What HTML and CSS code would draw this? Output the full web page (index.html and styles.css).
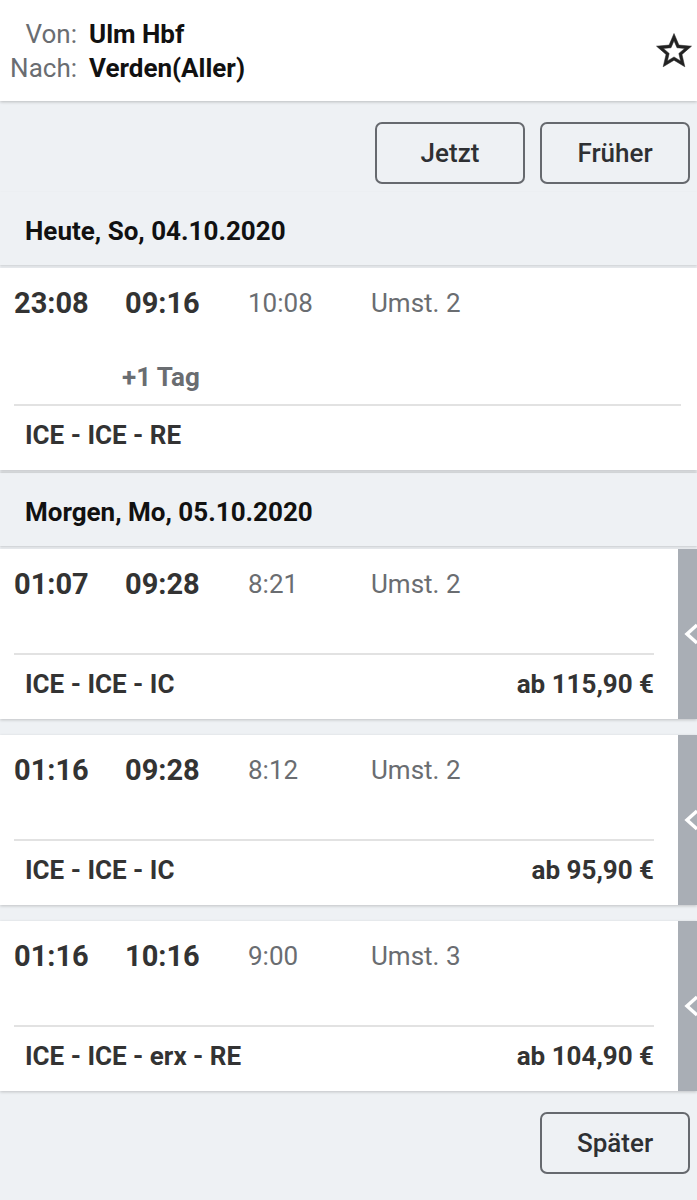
FILE: index.html
```html
<!DOCTYPE html>
<html lang="de">
<head>
<meta charset="UTF-8" />
<meta name="viewport" content="width=device-width, initial-scale=1" />
<title>Verbindungen</title>
<link rel="stylesheet" href="styles.css">
</head>
<body>

<header class="route">
  <div class="stations">
    <span class="label">Von:</span><span class="station">Ulm Hbf</span>
    <span class="label">Nach:</span><span class="station">Verden(Aller)</span>
  </div>
  <svg class="star" width="42" height="42" viewBox="0 0 24 24"><path fill="#222" stroke="#222" stroke-width="0.3" d="M22 9.24l-7.19-.62L12 2 9.19 8.63 2 9.24l5.46 4.73L5.82 21 12 17.27 18.18 21l-1.63-7.03L22 9.24zM12 15.4l-3.76 2.27 1-4.28-3.32-2.88 4.38-.38L12 6.1l1.71 4.04 4.380.38-3.32 2.88 1 4.28L12 15.4z"/></svg>
</header>

<div class="actions">
  <button class="btn">Jetzt</button>
  <button class="btn">Früher</button>
</div>

<div class="day first">Heute, So, 04.10.2020</div>

<div class="trip">
  <div class="trip-body">
    <div class="trip-main">
      <div class="times">
        <span class="dep">23:08</span>
        <span class="arr">09:16</span>
        <span class="dur">10:08</span>
        <span class="chg">Umst. 2</span>
      </div>
      <div class="next-day">+1 Tag</div>
    </div>
    <div class="trip-foot wide">
      <span class="trains">ICE - ICE - RE</span>
    </div>
  </div>
</div>

<div class="day">Morgen, Mo, 05.10.2020</div>

<div class="trip">
  <div class="trip-body">
    <div class="trip-main">
      <div class="times">
        <span class="dep">01:07</span>
        <span class="arr">09:28</span>
        <span class="dur">8:21</span>
        <span class="chg">Umst. 2</span>
      </div>
    </div>
    <div class="trip-foot">
      <span class="trains">ICE - ICE - IC</span>
      <span class="price">ab 115,90 €</span>
    </div>
  </div>
  <div class="side"><svg width="19" height="22" viewBox="0 0 19 22"><polyline points="19,2 9,11 19,20" fill="none" stroke="#fff" stroke-width="3.5"/></svg></div>
</div>

<div class="trip">
  <div class="trip-body">
    <div class="trip-main">
      <div class="times">
        <span class="dep">01:16</span>
        <span class="arr">09:28</span>
        <span class="dur">8:12</span>
        <span class="chg">Umst. 2</span>
      </div>
    </div>
    <div class="trip-foot">
      <span class="trains">ICE - ICE - IC</span>
      <span class="price">ab 95,90 €</span>
    </div>
  </div>
  <div class="side"><svg width="19" height="22" viewBox="0 0 19 22"><polyline points="19,2 9,11 19,20" fill="none" stroke="#fff" stroke-width="3.5"/></svg></div>
</div>

<div class="trip">
  <div class="trip-body">
    <div class="trip-main">
      <div class="times">
        <span class="dep">01:16</span>
        <span class="arr">10:16</span>
        <span class="dur">9:00</span>
        <span class="chg">Umst. 3</span>
      </div>
    </div>
    <div class="trip-foot">
      <span class="trains">ICE - ICE - erx - RE</span>
      <span class="price">ab 104,90 €</span>
    </div>
  </div>
  <div class="side"><svg width="19" height="22" viewBox="0 0 19 22"><polyline points="19,2 9,11 19,20" fill="none" stroke="#fff" stroke-width="3.5"/></svg></div>
</div>

<div class="actions bottom">
  <button class="btn">Später</button>
</div>

</body>
</html>
```

FILE: styles.css
```css
body {
  margin: 0;
  font-family: Roboto, "Liberation Sans", sans-serif;
  background: #eef1f4;
  color: #333;
}
.route {
  display: flex;
  align-items: center;
  justify-content: space-between;
  background: white;
  height: 101px;
  padding: 0 2px 0 0;
  box-sizing: border-box;
  box-shadow: 0 1px 3px rgba(0,0,0,0.22);
  position: relative;
}
.stations {
  display: grid;
  grid-template-columns: 77px auto;
  column-gap: 12px;
  line-height: 34px;
}
.label {
  text-align: right;
  font-size: 26px;
  color: #6a6d71;
}
.station {
  font-size: 26px;
  font-weight: bold;
  color: #111;
}
.actions {
  display: flex;
  justify-content: flex-end;
  gap: 15px;
  padding: 21px 7px 0 0;
}
.btn {
  width: 150px;
  height: 62px;
  border: 2px solid #66696e;
  border-radius: 7px;
  background: #eef1f4;
  font-family: Roboto, "Liberation Sans", sans-serif;
  font-size: 26px;
  font-weight: 500;
  color: #2e3033;
}
.day {
  margin-top: 3px;
  padding: 24px 25px 19px;
  line-height: 30px;
  font-size: 26px;
  font-weight: bold;
  color: #111;
  box-shadow: 0 -1px 2px rgba(0,0,0,0.12), 0 1px 2px rgba(0,0,0,0.15);
}
.day.first {
  margin-top: 8px;
  box-shadow: 0 1px 2px rgba(0,0,0,0.15);
}
.trip {
  display: flex;
  background: white;
  margin-top: 3px;
  box-shadow: 0 1px 3px rgba(0,0,0,0.2);
}
.trip + .trip {
  margin-top: 16px;
}
.trip-body {
  flex: 1;
}
.trip-main {
  min-height: 104px;
  box-sizing: border-box;
  padding: 17px 0 9px 14px;
}
.times {
  display: grid;
  grid-template-columns: 111px 123px 123px auto;
  align-items: center;
  height: 36px;
}
.dep, .arr {
  font-size: 29px;
  font-weight: bold;
  color: #333;
}
.dur, .chg {
  font-size: 26px;
  color: #6a6d71;
}
.next-day {
  margin: 38px 0 0 108px;
  line-height: 36px;
  font-size: 26px;
  font-weight: bold;
  color: #6a6d71;
}
.trip-foot {
  display: flex;
  justify-content: space-between;
  border-top: 2px solid #e2e2e2;
  margin: 0 24px 0 14px;
  padding: 14px 0 20px 11px;
  line-height: 30px;
  font-size: 26px;
  font-weight: bold;
  color: #333;
}
.trip-foot.wide {
  margin-right: 16px;
}
.side {
  width: 19px;
  background: #a9aeb5;
  display: flex;
  align-items: center;
  overflow: hidden;
}
.actions.bottom {
  padding-top: 21px;
}
```
